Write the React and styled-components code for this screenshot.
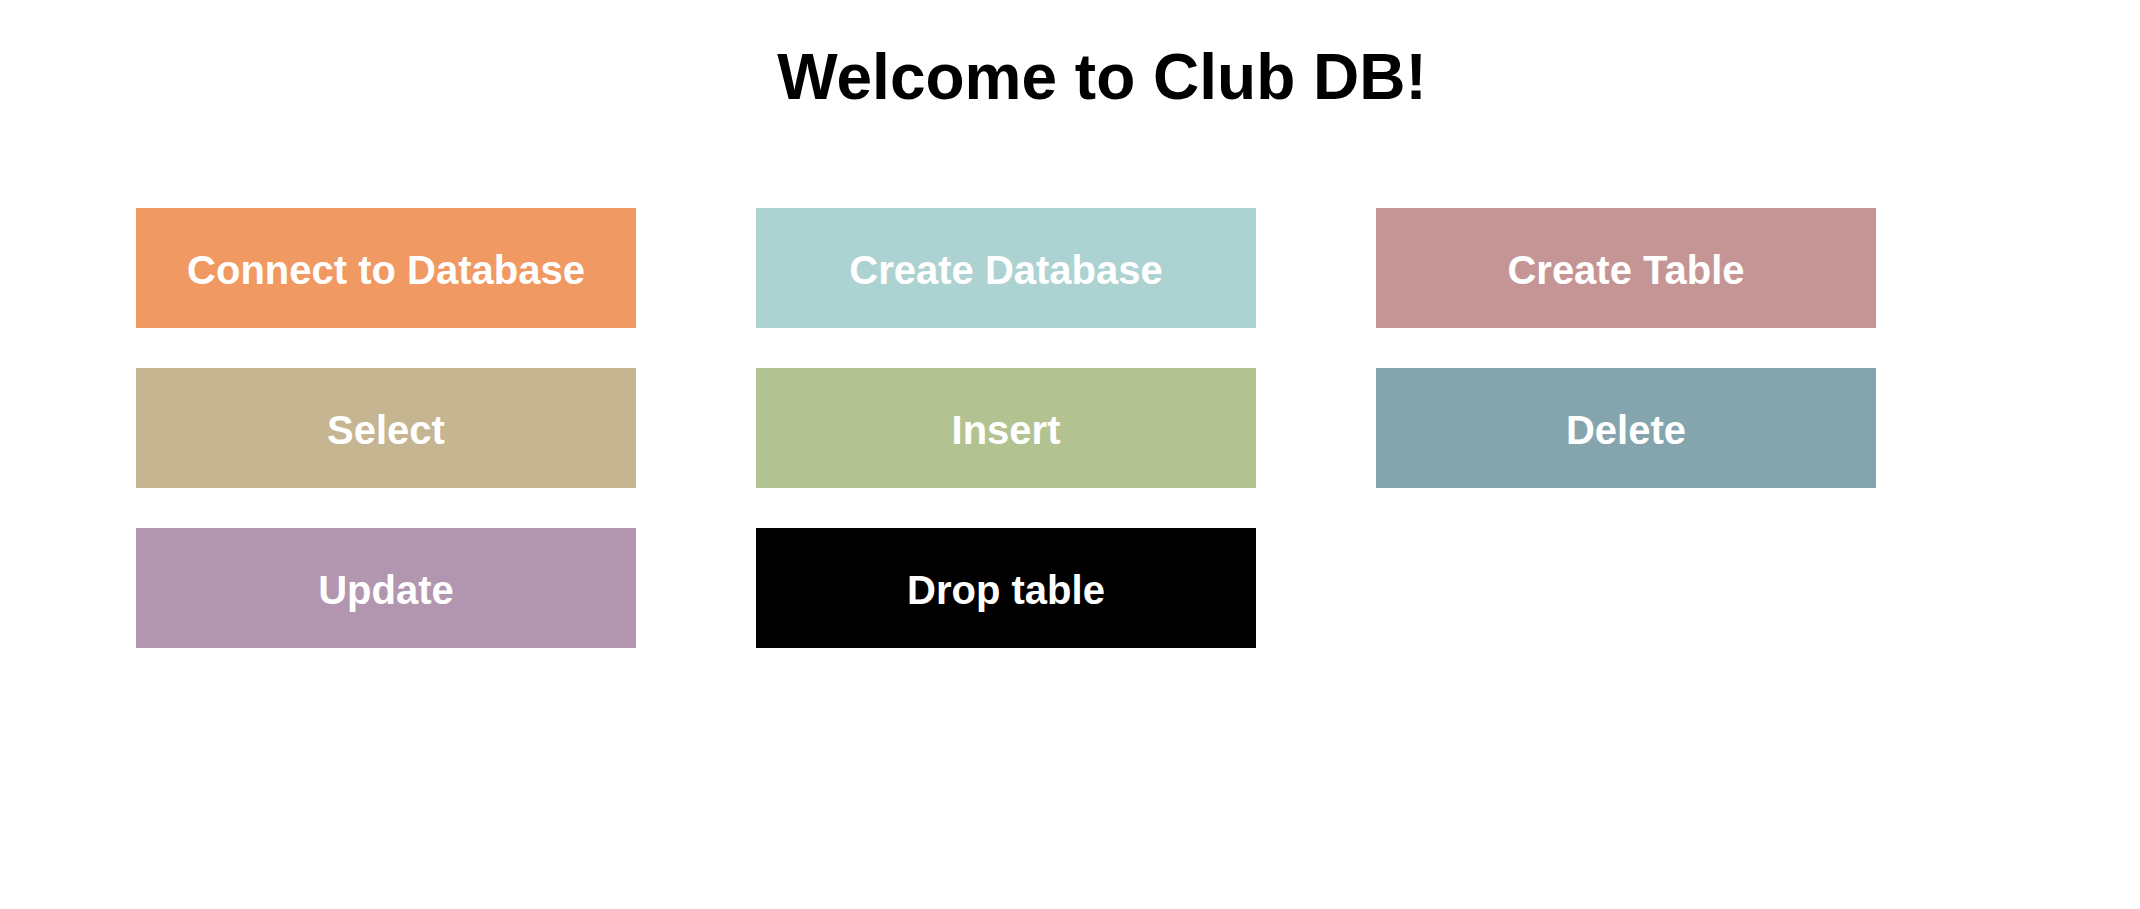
import React from "react"
import styled, { createGlobalStyle } from "styled-components"

const GlobalStyle = createGlobalStyle`
  body {
    margin: 0;
    background: #ffffff;
    font-family: "Liberation Sans", Arial, sans-serif;
  }
`

const Page = styled.div`
  min-height: 909px;
  padding-top: 40px;
  box-sizing: border-box;
`

const Title = styled.h1`
  margin: 0;
  padding-left: 64px;
  text-align: center;
  font-size: 64px;
  font-weight: bold;
  line-height: normal;
  color: #000;
`

const ButtonGrid = styled.div`
  display: grid;
  grid-template-columns: repeat(3, 500px);
  column-gap: 120px;
  row-gap: 40px;
  margin: 94px 0 0 136px;
`

const ActionButton = styled.button`
  height: 120px;
  box-sizing: border-box;
  border: none;
  background-color: ${({ color }) => color};
  color: #ffffff;
  font-family: "Liberation Sans", Arial, sans-serif;
  font-size: 40px;
  font-weight: bold;
  display: flex;
  align-items: center;
  justify-content: center;
  cursor: pointer;
  padding: 5px 0 0;
`

const actions = [
  { label: "Connect to Database", color: "#f09963" },
  { label: "Create Database", color: "#acd3d1" },
  { label: "Create Table", color: "#c59595" },
  { label: "Select", color: "#c6b591" },
  { label: "Insert", color: "#b2c391" },
  { label: "Delete", color: "#84a5ad" },
  { label: "Update", color: "#b296af" },
  { label: "Drop table", color: "#000000" },
]

const App = () => {
  return (
    <Page>
      <GlobalStyle />
      <Title>Welcome to Club DB!</Title>
      <ButtonGrid>
        {actions.map((a) => (
          <ActionButton key={a.label} color={a.color}>
            {a.label}
          </ActionButton>
        ))}
      </ButtonGrid>
    </Page>
  )
}

export default App
